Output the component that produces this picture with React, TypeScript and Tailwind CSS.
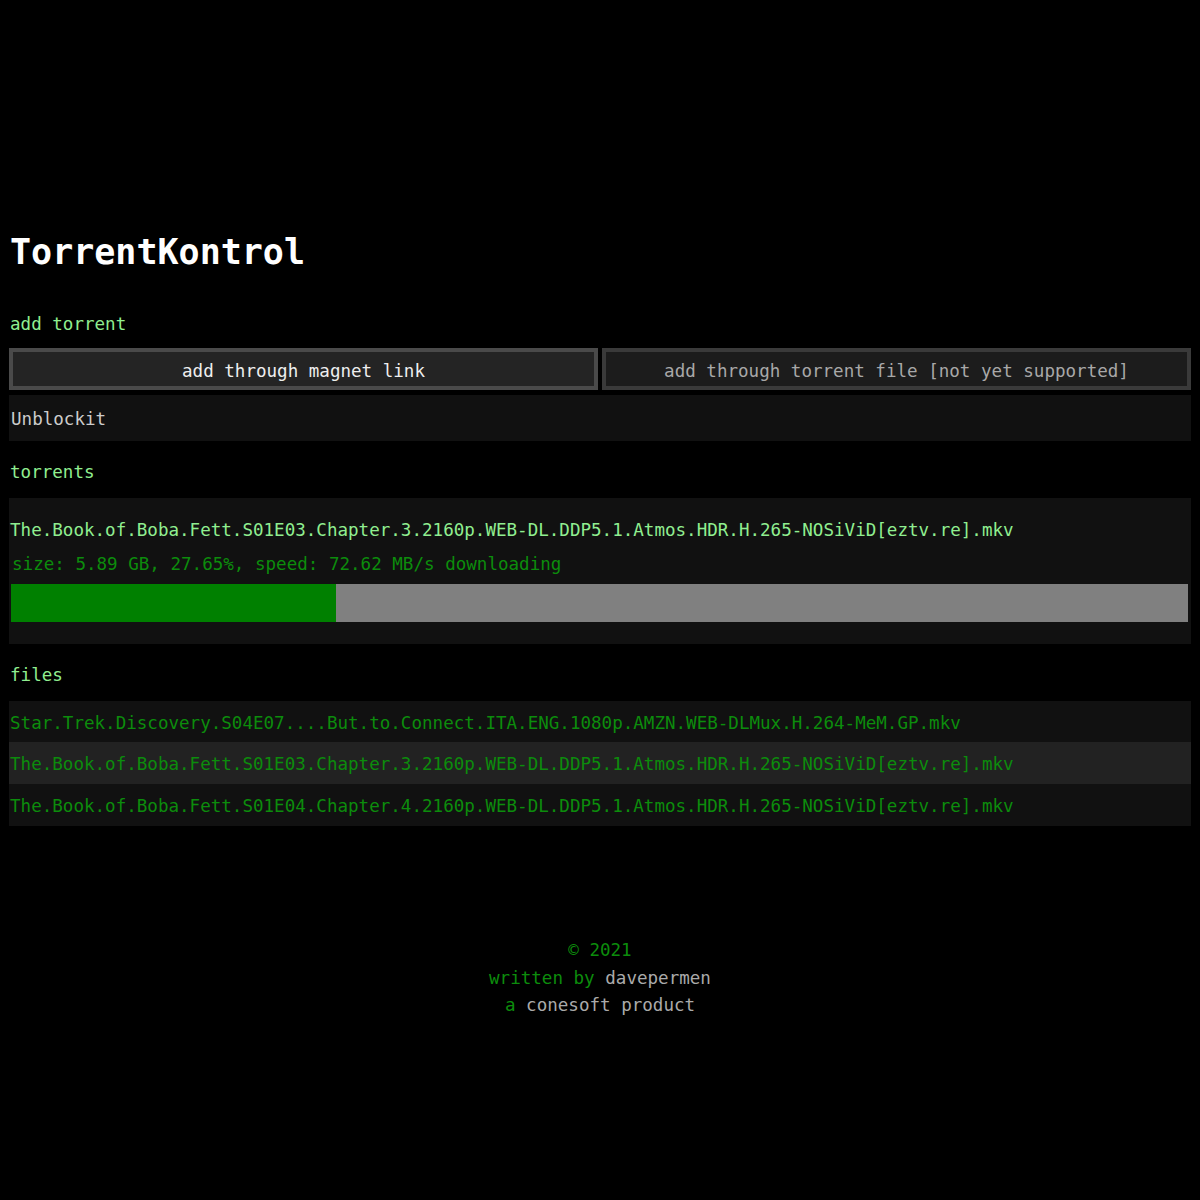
import React from "react";

const files = [
  { name: "Star.Trek.Discovery.S04E07....But.to.Connect.ITA.ENG.1080p.AMZN.WEB-DLMux.H.264-MeM.GP.mkv", bg: "bg-[#111111]", h: "h-[41px]" },
  { name: "The.Book.of.Boba.Fett.S01E03.Chapter.3.2160p.WEB-DL.DDP5.1.Atmos.HDR.H.265-NOSiViD[eztv.re].mkv", bg: "bg-[#222222]", h: "h-[42px]" },
  { name: "The.Book.of.Boba.Fett.S01E04.Chapter.4.2160p.WEB-DL.DDP5.1.Atmos.HDR.H.265-NOSiViD[eztv.re].mkv", bg: "bg-[#111111]", h: "h-[42px]" },
];

export default function App() {
  const progress = 27.65;
  return (
    <div className="min-h-[1200px] bg-black font-['DejaVu_Sans_Mono',monospace] text-[17.56px] text-[#cccccc]">
      <div className="mx-[9px] pt-[228px]">
        <h1 className="h-[48px] pl-[1px] text-[35px] font-bold leading-[48px] text-white">TorrentKontrol</h1>

        <div className="mt-[34px] h-[28px] pl-[1px] leading-[28px] text-[#90ee90]">add torrent</div>

        <div className="mt-[10px] flex gap-[4px]">
          <button className="h-[42px] flex-1 border-4 border-[#4a4a4a] bg-[#242424] pt-[2px] leading-[34px] text-[#eeeeee]">
            add through magnet link
          </button>
          <button className="h-[42px] flex-1 border-4 border-[#3a3a3a] bg-[#1c1c1c] pt-[2px] leading-[34px] text-[#a8a8a8]">
            add through torrent file [not yet supported]
          </button>
        </div>

        <div className="mt-[5px] flex h-[46px] items-center bg-[#111111] pl-[2px] pt-[3px] text-[#cccccc]">Unblockit</div>

        <div className="mt-[17px] h-[28px] pl-[1px] leading-[28px] text-[#90ee90]">torrents</div>

        <div className="mt-[12px] h-[146px] bg-[#111111]">
          <div className="pt-[18px] h-[47px] pl-[1px] leading-[28px] text-[#90ee90]">
            The.Book.of.Boba.Fett.S01E03.Chapter.3.2160p.WEB-DL.DDP5.1.Atmos.HDR.H.265-NOSiViD[eztv.re].mkv
          </div>
          <div className="mt-[5px] h-[28px] pl-[3px] leading-[28px] text-[#0c8c0c]">
            size: 5.89 GB, 27.65%, speed: 72.62 MB/s downloading
          </div>
          <div className="ml-[2px] mr-[3px] mt-[6px] flex h-[38px] bg-[#808080]">
            <div className="h-full bg-[#008000]" style={{ width: `${progress}%` }} />
          </div>
        </div>

        <div className="mt-[17px] h-[28px] pl-[1px] leading-[28px] text-[#90ee90]">files</div>

        <div className="mt-[12px]">
          {files.map((f, i) => (
            <div key={i} className={`flex items-center pl-[1px] pt-[3px] text-[#0c8c0c] ${f.bg} ${f.h}`}>
              {f.name}
            </div>
          ))}
        </div>

        <div className="mt-[111px] text-center leading-[27.5px]">
          <div className="text-[#0c8c0c]">© 2021</div>
          <div>
            <span className="text-[#0c8c0c]">written by</span> <span className="text-[#aaaaaa]">davepermen</span>
          </div>
          <div>
            <span className="text-[#0c8c0c]">a</span> <span className="text-[#aaaaaa]">conesoft product</span>
          </div>
        </div>
      </div>
    </div>
  );
}
